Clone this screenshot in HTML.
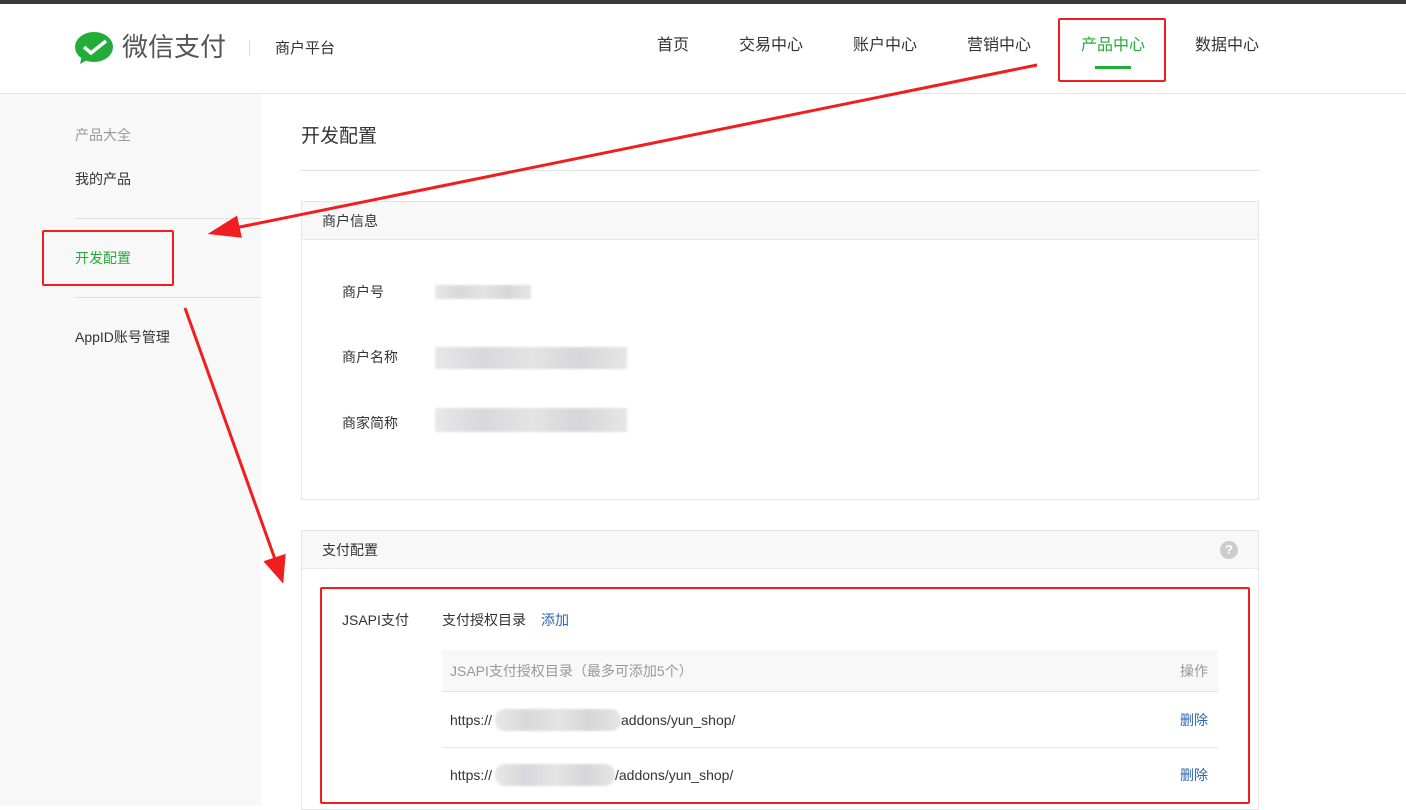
<!DOCTYPE html><html><head><meta charset="utf-8"><style>
*{margin:0;padding:0;box-sizing:border-box}
body{width:1406px;height:806px;overflow:hidden;background:#fff;font-family:"Liberation Sans","Noto Sans CJK SC",sans-serif;font-size:14px;color:#333;position:relative;line-height:1}
.a{position:absolute;white-space:nowrap}
.blur{position:absolute;background:linear-gradient(90deg,#e8e8e8,#d8d8dc,#e4e4e4,#d6d6d8,#e6e6e6);filter:blur(1px)}
.rb{position:absolute;border:2px solid #f01e1e;border-radius:2px}
</style></head><body>
<div class="a" style="left:0;top:0;width:1406px;height:4px;background:#38383c"></div>
<div class="a" style="left:0;top:93px;width:1406px;height:1px;background:#e5e5e5"></div>
<svg class="a" style="left:74px;top:31px" width="40" height="36" viewBox="0 0 40 36"><ellipse cx="20" cy="16" rx="19" ry="15" fill="#22ac38"/><path d="M8 24 L6 33 L15 28Z" fill="#22ac38"/><path d="M10 16 L17 22 L32 10" stroke="#fff" stroke-width="3.5" fill="none"/></svg>
<div class="a" style="left:122px;top:34px;font-size:26px;color:#555">微信支付</div>
<div class="a" style="left:249px;top:40px;width:1px;height:16px;background:#ddd"></div>
<div class="a" style="left:275px;top:41px;font-size:15px">商户平台</div>
<div class="a" style="left:657px;top:38px;font-size:16px">首页</div>
<div class="a" style="left:739px;top:38px;font-size:16px">交易中心</div>
<div class="a" style="left:853px;top:38px;font-size:16px">账户中心</div>
<div class="a" style="left:967px;top:38px;font-size:16px">营销中心</div>
<div class="a" style="left:1081px;top:38px;font-size:16px;color:#22ac38">产品中心</div>
<div class="a" style="left:1095px;top:66px;width:36px;height:3px;background:#22ac38"></div>
<div class="a" style="left:1195px;top:38px;font-size:16px">数据中心</div>
<div class="rb" style="left:1058px;top:18px;width:108px;height:64px"></div>
<div class="a" style="left:0;top:94px;width:261px;height:712px;background:#f8f8f8"></div>
<div class="a" style="left:75px;top:128px;color:#999">产品大全</div>
<div class="a" style="left:75px;top:172px">我的产品</div>
<div class="a" style="left:75px;top:218px;width:186px;height:1px;background:#e0e0e0"></div>
<div class="a" style="left:75px;top:251px;color:#22ac38">开发配置</div>
<div class="rb" style="left:42px;top:230px;width:132px;height:56px"></div>
<div class="a" style="left:75px;top:297px;width:186px;height:1px;background:#e0e0e0"></div>
<div class="a" style="left:75px;top:330px">AppID账号管理</div>
<div class="a" style="left:301px;top:127px;font-size:19px">开发配置</div>
<div class="a" style="left:301px;top:170px;width:958px;height:1px;background:#e0e0e0"></div>
<div class="a" style="left:301px;top:201px;width:958px;height:299px;border:1px solid #e5e5e5"></div>
<div class="a" style="left:302px;top:202px;width:956px;height:38px;background:#f8f8f8;border-bottom:1px solid #e8e8e8"></div>
<div class="a" style="left:322px;top:214px">商户信息</div>
<div class="a" style="left:342px;top:285px">商户号</div>
<div class="a" style="left:342px;top:350px">商户名称</div>
<div class="a" style="left:342px;top:416px">商家简称</div>
<div class="blur" style="left:435px;top:285px;width:96px;height:14px"></div>
<div class="blur" style="left:435px;top:347px;width:192px;height:22px"></div>
<div class="blur" style="left:435px;top:408px;width:192px;height:24px"></div>
<div class="a" style="left:301px;top:530px;width:958px;height:280px;border:1px solid #e5e5e5"></div>
<div class="a" style="left:302px;top:531px;width:956px;height:38px;background:#f8f8f8;border-bottom:1px solid #e8e8e8"></div>
<div class="a" style="left:322px;top:543px">支付配置</div>
<div class="a" style="left:1220px;top:541px;width:18px;height:18px;border-radius:50%;background:#ccc;color:#fff;font-size:13px;text-align:center;line-height:18px;font-weight:bold">?</div>
<div class="a" style="left:342px;top:613px">JSAPI支付</div>
<div class="a" style="left:442px;top:613px">支付授权目录</div>
<div class="a" style="left:541px;top:613px;color:#2d64b3">添加</div>
<div class="a" style="left:442px;top:650px;width:776px;height:42px;background:#f8f8f8;border-bottom:1px solid #e5e5e5"></div>
<div class="a" style="left:450px;top:664px;color:#999">JSAPI支付授权目录（最多可添加5个）</div>
<div class="a" style="left:1180px;top:664px;color:#999">操作</div>
<div class="a" style="left:442px;top:747px;width:776px;height:1px;background:#e5e5e5"></div>
<div class="a" style="left:450px;top:713px">https://</div>
<div class="blur" style="left:495px;top:709px;width:126px;height:22px;border-radius:10px"></div>
<div class="a" style="left:621px;top:713px">addons/yun_shop/</div>
<div class="a" style="left:1180px;top:713px;color:#2d64b3">删除</div>
<div class="a" style="left:450px;top:768px">https://</div>
<div class="blur" style="left:495px;top:764px;width:120px;height:22px;border-radius:10px"></div>
<div class="a" style="left:615px;top:768px">/addons/yun_shop/</div>
<div class="a" style="left:1180px;top:768px;color:#2d64b3">删除</div>
<div class="rb" style="left:320px;top:587px;width:930px;height:217px"></div>
<svg class="a" style="left:0;top:0" width="1406" height="806"><g stroke="#f01e1e" stroke-width="3" fill="#f01e1e"><line x1="1037" y1="65" x2="230" y2="229"/><path d="M212 233 L236 218 L240 236Z"/><line x1="185" y1="308" x2="276" y2="562"/><path d="M282 580 L266 562 L284 556Z"/></g></svg>
</body></html>
